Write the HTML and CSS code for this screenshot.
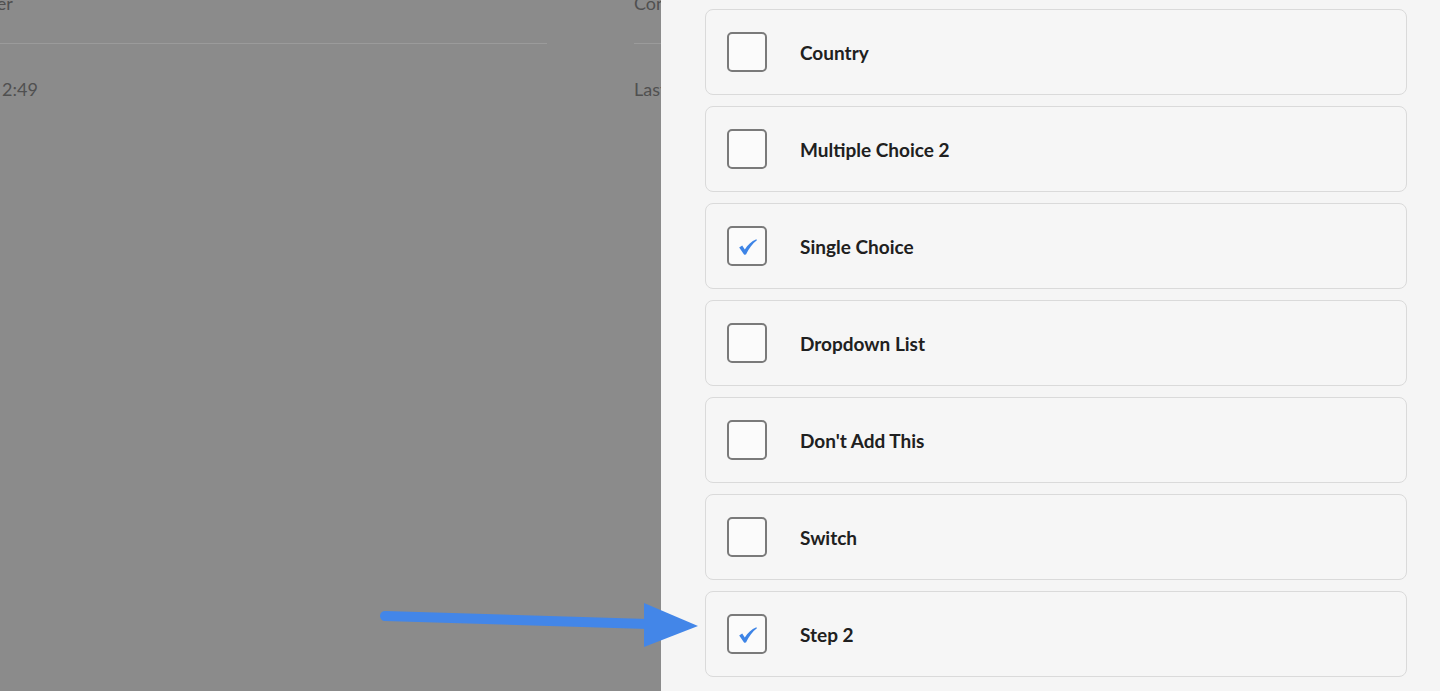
FILE: index.html
```html
<!DOCTYPE html>
<html>
<head>
<meta charset="utf-8">
<link rel="stylesheet" href="styles.css">
</head>
<body>
<div class="page">
  <section class="backdrop">
    <div class="cols">
      <div class="col col-a">
        <div class="cell-head"><span class="head-text">Member</span></div>
        <div class="cell-val">2:49</div>
      </div>
      <div class="col col-b">
        <div class="cell-head">Contact</div>
        <div class="cell-val">Last</div>
      </div>
    </div>
  </section>
  <aside class="panel">
    <label class="item"><span class="box"></span><span class="name">Country</span></label>
    <label class="item"><span class="box"></span><span class="name">Multiple Choice 2</span></label>
    <label class="item"><span class="box"><svg class="tick" viewBox="0 0 18 16" width="18" height="16"><path d="M0.2 8.6 L3.2 6.6 L5.8 10.6 C8.6 6 12.4 2.2 17.4 0.2 L17.9 1.2 C13.4 4.4 9.8 9.6 7 15.6 L5.2 15.8 Z" fill="#3d84e6"/></svg></span><span class="name">Single Choice</span></label>
    <label class="item"><span class="box"></span><span class="name">Dropdown List</span></label>
    <label class="item"><span class="box"></span><span class="name">Don't Add This</span></label>
    <label class="item"><span class="box"></span><span class="name">Switch</span></label>
    <label class="item"><span class="box"><svg class="tick" viewBox="0 0 18 16" width="18" height="16"><path d="M0.2 8.6 L3.2 6.6 L5.8 10.6 C8.6 6 12.4 2.2 17.4 0.2 L17.9 1.2 C13.4 4.4 9.8 9.6 7 15.6 L5.2 15.8 Z" fill="#3d84e6"/></svg></span><span class="name">Step 2</span></label>
  </aside>
  <svg class="arrow" width="330" height="60" viewBox="0 0 330 60">
    <line x1="7" y1="15" x2="270" y2="23" stroke="#4386e8" stroke-width="10" stroke-linecap="round"/>
    <polygon points="266,2 320,25 266,46" fill="#4386e8"/>
  </svg>
</div>
</body>
</html>
```
FILE: styles.css
```css
* { box-sizing: border-box; }
html, body { margin: 0; padding: 0; }
body {
  font-family: Lato, "Open Sans", "Liberation Sans", sans-serif;
  width: 1440px;
  height: 691px;
  overflow: hidden;
}
.page {
  position: relative;
  display: flex;
  width: 1440px;
  height: 691px;
}
.backdrop {
  width: 661px;
  flex: none;
  background: #8b8b8b;
  overflow: hidden;
}
.cols {
  display: flex;
  gap: 87px;
  margin-left: -60px;
  margin-top: -18px;
}
.col { flex: none; }
.col-a { width: 607px; }
.col-b { width: 200px; }
.cell-head {
  height: 62px;
  padding-top: 10px;
  font-size: 18px;
  color: #505050;
  border-bottom: 1px solid #9b9b9b;
}
.col-a .cell-head { padding-left: 6px; }
.cell-val {
  padding-top: 34px;
  font-size: 18px;
  color: #505050;
}
.col-a .cell-val { padding-left: 62px; }
.panel {
  flex: 1;
  background: #f5f5f5;
  padding: 9px 33px 0 44px;
  display: flex;
  flex-direction: column;
  gap: 11px;
}
.item {
  display: flex;
  align-items: center;
  height: 86px;
  flex: none;
  border: 1.5px solid #dadada;
  border-radius: 8px;
  background: #f6f6f6;
  padding-left: 21px;
}
.box {
  width: 40px;
  height: 40px;
  flex: none;
  border: 2px solid #7a7a7a;
  border-radius: 5px;
  background: #fbfbfb;
  display: flex;
  align-items: center;
  justify-content: center;
}
.tick { display: block; margin-top: 1px; margin-left: 1px; }
.name {
  margin-left: 33px;
  font-size: 19px;
  font-weight: 700;
  color: #202020;
}
.arrow {
  position: absolute;
  left: 378px;
  top: 601px;
}
```
